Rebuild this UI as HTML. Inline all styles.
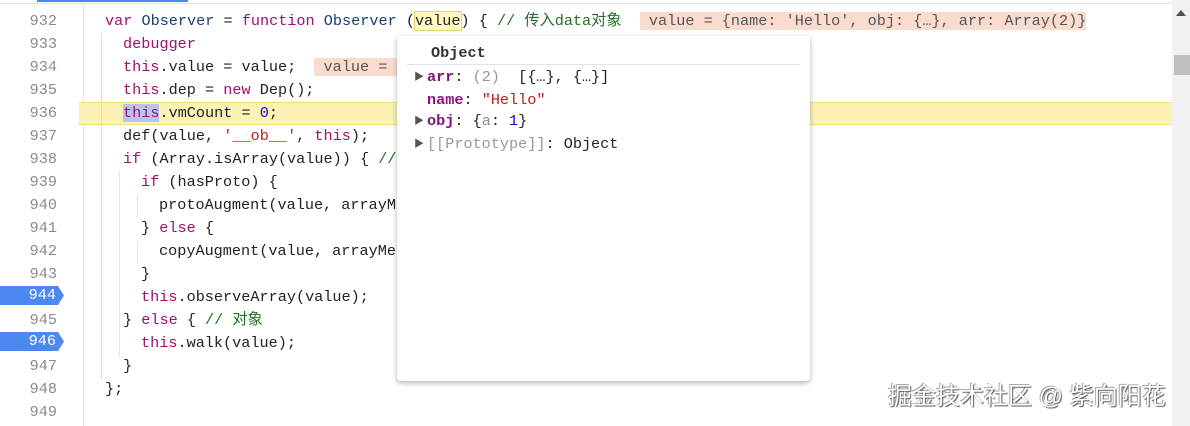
<!DOCTYPE html>
<html><head><meta charset="utf-8"><style>
*{margin:0;padding:0;box-sizing:border-box}
body{width:1190px;height:426px;overflow:hidden;background:#fff;position:relative;font-family:"Liberation Mono","Noto Sans CJK SC",monospace;font-size:15.2px;color:#222}
.ln{position:absolute;left:0;width:57px;text-align:right;color:#8a8a8a;height:23px;line-height:23px}
.c{position:absolute;height:23px;line-height:23px;white-space:pre}
.k{color:#a0106c}.s{color:#c41a16}.n{color:#1c00cf}.bl{color:#1a3e6e}
.cmt{color:#236e25}
.inl{background:#fadccf;color:#555}
.g{position:absolute;width:1px;background:#d8dde8}
.bp{position:absolute;left:0;width:64px;height:19px;background:#4b89f0;color:#fff;text-align:right;padding-right:8px;line-height:19px;clip-path:polygon(0 0,58px 0,64px 50%,58px 100%,0 100%)}
.pop{position:absolute;left:397px;top:36px;width:413px;height:345px;background:#fff;border-radius:4px;box-shadow:0 2px 6px rgba(0,0,0,.3)}
.p{position:absolute;left:30px;height:23px;line-height:23px;white-space:pre}
.key{color:#881280;font-weight:bold}
.tri{position:absolute;left:17px;font-size:10px;color:#555;line-height:23px}
</style></head><body>
<div style="position:absolute;left:0;top:3px;width:1172px;height:1px;background:#dde3ee"></div>
<div style="position:absolute;left:37px;top:0;width:151px;height:2px;background:#4b89f0"></div>
<div style="position:absolute;left:83px;top:4px;width:1px;height:422px;background:#e4e4e4"></div>
<div style="position:absolute;left:79px;top:102px;width:1093px;height:23px;background:#fcf2b5;border-top:1px solid #f0dd7a;border-bottom:1px solid #f0dd7a"></div>
<div class="g" style="left:101px;top:33px;height:346px"></div>
<div class="g" style="left:119px;top:171px;height:186px;background:#e6e6e6"></div>
<div class="g" style="left:137px;top:195px;height:23px;background:#e6e6e6"></div>
<div class="g" style="left:137px;top:241px;height:23px;background:#e6e6e6"></div>

<div class="ln" style="top:10px">932</div>
<div class="ln" style="top:33px">933</div>
<div class="ln" style="top:56px">934</div>
<div class="ln" style="top:79px">935</div>
<div class="ln" style="top:102px">936</div>
<div class="ln" style="top:125px">937</div>
<div class="ln" style="top:148px">938</div>
<div class="ln" style="top:171px">939</div>
<div class="ln" style="top:194px">940</div>
<div class="ln" style="top:217px">941</div>
<div class="ln" style="top:240px">942</div>
<div class="ln" style="top:263px">943</div>
<div class="bp" style="top:286px">944</div>
<div class="ln" style="top:309px">945</div>
<div class="bp" style="top:332px">946</div>
<div class="ln" style="top:355px">947</div>
<div class="ln" style="top:378px">948</div>
<div class="ln" style="top:401px">949</div>

<div class="c" style="left:105px;top:10px"><span class="k">var</span> <span class="bl">Observer</span> = <span class="k">function</span> <span class="bl">Observer</span> (<span style="background:#fff8c0;outline:1px solid #ecd36a">value</span>) { <span class="cmt">// 传入data对象</span>  <span class="inl"> value = {name: 'Hello', obj: {…}, arr: Array(2)}</span></div>
<div class="c k" style="left:123px;top:33px">debugger</div>
<div class="c" style="left:123px;top:56px"><span class="k">this</span>.value = value;  <span class="inl"> value = {name</span></div>
<div class="c" style="left:123px;top:79px"><span class="k">this</span>.dep = <span class="k">new</span> Dep();</div>
<div class="c" style="left:123px;top:102px"><span class="k" style="background:#b4c6f0">this</span>.vmCount = <span class="n">0</span>;</div>
<div class="c" style="left:123px;top:125px">def(value, <span class="s">'__ob__'</span>, <span class="k">this</span>);</div>
<div class="c" style="left:123px;top:148px"><span class="k">if</span> (Array.isArray(value)) { <span class="cmt">// </span></div>
<div class="c" style="left:141px;top:171px"><span class="k">if</span> (hasProto) {</div>
<div class="c" style="left:159px;top:194px">protoAugment(value, arrayMe</div>
<div class="c" style="left:141px;top:217px">} <span class="k">else</span> {</div>
<div class="c" style="left:159px;top:240px">copyAugment(value, arrayMet</div>
<div class="c" style="left:141px;top:263px">}</div>
<div class="c" style="left:141px;top:286px"><span class="k">this</span>.observeArray(value);</div>
<div class="c" style="left:123px;top:309px">} <span class="k">else</span> { <span class="cmt">// 对象</span></div>
<div class="c" style="left:141px;top:332px"><span class="k">this</span>.walk(value);</div>
<div class="c" style="left:123px;top:355px">}</div>
<div class="c" style="left:105px;top:378px">};</div>

<div class="pop">
<div style="position:absolute;left:34px;top:6px;font-weight:bold;color:#333;line-height:23px">Object</div>
<div style="position:absolute;left:10px;right:10px;top:28px;height:1px;background:#dde3ee"></div>
<div class="tri" style="top:31px">▶</div>
<div class="p" style="top:30px"><span class="key">arr</span>: <span style="color:#999">(2)</span>  [{…}, {…}]</div>
<div class="p" style="top:53px"><span class="key">name</span>: <span class="s">"Hello"</span></div>
<div class="tri" style="top:75px">▶</div>
<div class="p" style="top:74px"><span class="key">obj</span>: {<span style="color:#888">a</span>: <span class="n">1</span>}</div>
<div class="tri" style="top:98px">▶</div>
<div class="p" style="top:97px"><span style="color:#999">[[Prototype]]</span>: Object</div>
</div>

<div style="position:absolute;left:1172px;top:0;width:18px;height:426px;background:#f1f1f1"></div>
<div style="position:absolute;left:1176px;top:10px;width:0;height:0;border-left:5px solid transparent;border-right:5px solid transparent;border-bottom:6px solid #505050"></div>
<div style="position:absolute;left:1174px;top:55px;width:16px;height:20px;background:#c1c1c1"></div>

<div style="position:absolute;left:888px;top:382px;font-family:'Liberation Sans','Noto Sans CJK SC',sans-serif;font-size:24px;color:#fff;text-shadow:1px 1px 1px #555,-1px -1px 0 #aaa;line-height:30px">掘金技术社区 @ 紫向阳花</div>
</body></html>
